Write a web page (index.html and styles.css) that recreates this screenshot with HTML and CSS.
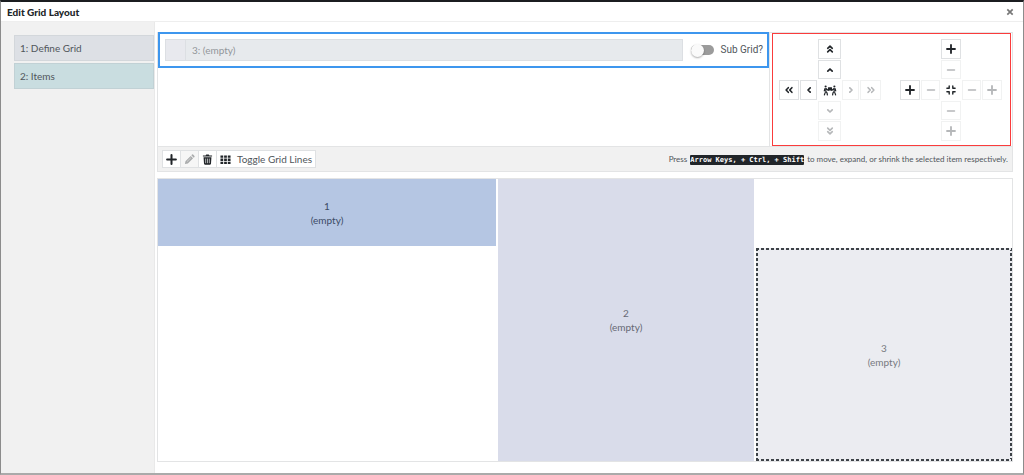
FILE: index.html
```html
<!DOCTYPE html>
<html lang="en">
<head>
<meta charset="utf-8">
<title>Edit Grid Layout</title>
<link rel="stylesheet" href="styles.css">
</head>
<body>
<svg class="sprite" aria-hidden="true">
  <symbol id="plus" viewBox="0 0 12 12"><path d="M6 1.2v9.6M1.2 6h9.6" fill="none" stroke="currentColor" stroke-width="2.2" stroke-linecap="round"/></symbol>
  <symbol id="minus" viewBox="0 0 12 12"><path d="M1.8 6h8.4" fill="none" stroke="currentColor" stroke-width="1.8" stroke-linecap="round"/></symbol>
  <symbol id="angle" viewBox="0 0 12 12"><path d="M3.8 7.2L6 5l2.200 2.200" fill="none" stroke="currentColor" stroke-width="1.700" stroke-linecap="round" stroke-linejoin="round"/></symbol>
  <symbol id="angles" viewBox="0 0 12 12"><path d="M3.700 5.300L6 3.100l2.300 2.200M3.700 8.900L6 6.700l2.300 2.200" fill="none" stroke="currentColor" stroke-width="1.600" stroke-linecap="round" stroke-linejoin="round"/></symbol>
  <symbol id="carry" viewBox="0 0 16 12"><g fill="none" stroke="currentColor" stroke-width="1.4" stroke-linecap="round" stroke-linejoin="round"><path d="M3.200 3.700v3.400l1.400 1.600.4 2.200M2.500 8.400L1.600 11M3.700 4l1.700 1.500h1.100M12.800 3.700v3.400l-1.400 1.600-.4 2.200M13.500 8.400l.9 2.600M12.300 4l-1.700 1.500H9.500"/><path d="M2.200 3.800L1.500 6.500M13.800 3.800l.7 2.700"/></g><circle cx="3" cy="1.400" r="1.200" fill="currentColor"/><circle cx="13" cy="1.400" r="1.200" fill="currentColor"/><rect x="5.700" y="2.200" width="4.600" height="3.900" rx=".5" fill="currentColor"/></symbol>
  <symbol id="compress" viewBox="0 0 12 12"><path d="M4.200 1.900v2.300H1.900M7.800 1.900v2.300h2.300M4.200 10.100V7.800H1.900M7.800 10.100V7.800h2.300" fill="none" stroke="currentColor" stroke-width="1.400" stroke-linecap="round" stroke-linejoin="round"/></symbol>
  <symbol id="pencil" viewBox="0 0 12 12"><path d="M1 11l.6-3.200L7.300 2.100l2.600 2.600-5.700 5.700zM8 1.400l.8-.8q.6-.4 1.100 0L11.400 2.100q.4.500 0 1.100l-.8.800z" fill="currentColor"/><path d="M3.200 8.400L7.500 4.100" stroke="#f1f1f1" stroke-width=".6"/></symbol>
  <symbol id="trash" viewBox="0 0 12 12"><path d="M1 1.500h3L4.600.5h2.800L8 1.500h3v1.300H1zM1.700 3.500h8.600l-.5 7.200q-.1.900-1 .9H3.200q-.9 0-1-.9z" fill="currentColor"/><path d="M4 5v5M6 5v5M8 5v5" stroke="#fff" stroke-width=".7"/></symbol>
  <symbol id="cells" viewBox="0 0 12 12"><path d="M.5 1.500h3v2.500h-3zM4.500 1.500h3v2.500h-3zM8.500 1.500h3v2.500h-3zM.5 5h3v2.500h-3zM4.500 5h3v2.500h-3zM8.500 5h3v2.500h-3zM.5 8.500h3V11h-3zM4.500 8.500h3V11h-3zM8.500 8.500h3V11h-3z" fill="currentColor"/></symbol>
</svg>
<div class="dialog" role="dialog" aria-labelledby="title">
  <header class="dialog-header">
    <h1 id="title">Edit Grid Layout</h1>
    <button class="close" aria-label="Close"><svg viewBox="0 0 8 8"><path d="M1.300 1.300l5.400 5.400M6.700 1.300L1.300 6.700" fill="none" stroke="currentColor" stroke-width="1.700"/></svg></button>
  </header>
  <div class="dialog-body">
    <nav class="steps">
      <button class="step">1: Define Grid</button>
      <button class="step active">2: Items</button>
    </nav>
    <main class="content">
      <section class="panel">
        <div class="panel-top">
          <div class="items">
            <div class="item-row">
              <div class="item-field">
                <span class="swatch"></span>
                <input class="item-name" type="text" value="3: (empty)" aria-label="Item name" disabled>
              </div>
              <label class="switch"><input type="checkbox"><span>Sub Grid?</span></label>
            </div>
          </div>
          <div class="controls">
            <div class="pad move">
              <button class="pad-btn top2" aria-label="Move to top"><svg><use href="#angles"/></svg></button>
              <button class="pad-btn top1" aria-label="Move up"><svg><use href="#angle"/></svg></button>
              <button class="pad-btn left2" aria-label="Move to left edge"><svg class="turn-left"><use href="#angles"/></svg></button>
              <button class="pad-btn left1" aria-label="Move left"><svg class="turn-left"><use href="#angle"/></svg></button>
              <span class="hub"><svg class="wide"><use href="#carry"/></svg></span>
              <button class="pad-btn right1" aria-label="Move right" disabled><svg class="turn-right"><use href="#angle"/></svg></button>
              <button class="pad-btn right2" aria-label="Move to right edge" disabled><svg class="turn-right"><use href="#angles"/></svg></button>
              <button class="pad-btn bottom1" aria-label="Move down" disabled><svg class="turn-down"><use href="#angle"/></svg></button>
              <button class="pad-btn bottom2" aria-label="Move to bottom" disabled><svg class="turn-down"><use href="#angles"/></svg></button>
            </div>
            <div class="pad resize">
              <button class="pad-btn top2" aria-label="Expand up"><svg><use href="#plus"/></svg></button>
              <button class="pad-btn top1" aria-label="Shrink top" disabled><svg><use href="#minus"/></svg></button>
              <button class="pad-btn left2" aria-label="Expand left"><svg><use href="#plus"/></svg></button>
              <button class="pad-btn left1" aria-label="Shrink left" disabled><svg><use href="#minus"/></svg></button>
              <span class="hub"><svg><use href="#compress"/></svg></span>
              <button class="pad-btn right1" aria-label="Shrink right" disabled><svg><use href="#minus"/></svg></button>
              <button class="pad-btn right2" aria-label="Expand right" disabled><svg><use href="#plus"/></svg></button>
              <button class="pad-btn bottom1" aria-label="Shrink bottom" disabled><svg><use href="#minus"/></svg></button>
              <button class="pad-btn bottom2" aria-label="Expand down" disabled><svg><use href="#plus"/></svg></button>
            </div>
          </div>
        </div>
        <div class="toolbar">
          <div class="tools">
            <button class="tool" aria-label="Add item"><svg><use href="#plus"/></svg></button>
            <button class="tool" aria-label="Edit item" disabled><svg><use href="#pencil"/></svg></button>
            <button class="tool" aria-label="Delete item"><svg><use href="#trash"/></svg></button>
            <button class="tool"><svg><use href="#cells"/></svg>Toggle Grid Lines</button>
          </div>
          <p class="hint">Press <kbd>Arrow Keys, + Ctrl, + Shift</kbd> to move, expand, or shrink the selected item respectively.</p>
        </div>
      </section>
      <section class="canvas">
        <div class="cell one"><span>1</span><span>(empty)</span></div>
        <div class="cell two"><span>2</span><span>(empty)</span></div>
        <div class="cell three"><span>3</span><span>(empty)</span></div>
      </section>
    </main>
  </div>
</div>
</body>
</html>
```

FILE: styles.css
```css
* { box-sizing: border-box; }
body {
  margin: 0;
  background: #fff;
  color: #50565b;
  font: 10px/14px Lato, "Noto Sans", sans-serif;
}
button, input { font: inherit; color: inherit; margin: 0; }
button { padding: 0; background: #fff; border: 1px solid #dfe1e3; }
svg { display: block; width: 12px; height: 12px; }
.sprite { display: none; }
.dialog {
  display: flex;
  flex-direction: column;
  min-height: 100vh;
  border: 1px solid #8c8c8c;
  border-top: 2px solid #1b1d20;
  border-bottom: 2px solid #aaa;
}
.dialog-header {
  display: flex;
  align-items: center;
  justify-content: space-between;
  height: 20px;
  padding: 0 9px 0 6px;
  border-bottom: 1px solid #eee;
}
h1 { margin: 0; color: #212529; font-size: 10px; line-height: 14px; font-weight: 900; }
.close { border: 0; color: #777; }
.close svg { width: 8px; height: 8px; }
.dialog-body { display: flex; flex: 1; }
.steps {
  display: flex;
  flex-direction: column;
  gap: 2px;
  flex: none;
  width: 154px;
  padding: 13px 0 0 13px;
  background: #f1f1f1;
  border-right: 1px solid #e9e9e9;
}
.step {
  height: 26px;
  padding: 0 5px;
  text-align: left;
  background: #dde0e5;
  border: 1px solid #d3d7db;
}
.step.active { background: #c9dde0; border-color: #c1d1d5; }
.content {
  display: flex;
  flex-direction: column;
  flex: 1;
  gap: 6px;
  min-width: 0;
  padding: 10px 10px 11px 2px;
}
.panel { border: 1px solid #e3e4e5; }
.panel-top { display: flex; }
.items { flex: 1; min-width: 0; border-right: 1px solid #e3e4e5; }
.item-row {
  display: flex;
  align-items: center;
  gap: 8px;
  height: 36px;
  margin-top: -1px;
  padding: 0 4px 0 5px;
  border: 2px solid #3d96ee;
}
.item-field { display: flex; flex: 1; height: 22px; border: 1px solid #dcdfe3; background: #e7eaed; }
.swatch { width: 20px; background: #e8e9ee; border-right: 1px solid #dcdfe3; }
.item-name { flex: 1; min-width: 0; padding: 0 6px; border: 0; background: none; color: #92969a; }
.switch { display: flex; align-items: center; gap: 6px; font-family: Roboto, sans-serif; }
.switch input {
  appearance: none;
  display: flex;
  align-items: center;
  width: 23px;
  height: 10px;
  border-radius: 5px;
  background: #9b9b9b;
}
.switch input::before {
  content: "";
  width: 13px;
  height: 13px;
  flex: none;
  border-radius: 50%;
  background: #fafafa;
  box-shadow: 0 1px 2px #0005;
}
.switch input:checked { justify-content: flex-end; }
.controls {
  display: flex;
  justify-content: space-between;
  gap: 19px;
  margin: 0 1px 0 2px;
  padding: 5px 8px 4px 6px;
  border: 1px solid #fa3c3c;
}
.pad {
  display: grid;
  grid-template-columns: 20px 17px 23px 17px 21px;
  grid-template-rows: 20px 19px 20px 19px 20px;
  gap: 1px;
  grid-template-areas: ". . a . ." ". . b . ." "c d e f g" ". . h . ." ". . i . .";
  color: #212529;
}
.pad.resize { grid-template-columns: 20px 19px 20px 19px 20px; }
.pad-btn, .hub { display: flex; align-items: center; justify-content: center; color: #212529; }
.pad-btn:disabled { color: #b5b7b9; border-color: #f1f2f2; }
.top2 { grid-area: a; }
.top1 { grid-area: b; }
.left2 { grid-area: c; }
.left1 { grid-area: d; }
.hub { grid-area: e; }
.right1 { grid-area: f; }
.right2 { grid-area: g; }
.bottom1 { grid-area: h; }
.bottom2 { grid-area: i; }
.resize .pad-btn svg { width: 10px; height: 10px; }
.pad .wide { width: 14px; height: 11px; }
.turn-left { transform: rotate(-90deg); }
.turn-right { transform: rotate(90deg); }
.turn-down { transform: rotate(180deg); }
.toolbar {
  display: flex;
  align-items: center;
  justify-content: space-between;
  height: 25px;
  padding: 0 4px;
  background: #f1f1f1;
  border-top: 1px solid #e3e4e5;
}
.tools { display: flex; }
.tool { display: flex; align-items: center; gap: 6px; height: 18px; padding: 0 3px; }
.tool + .tool { border-left: 0; }
.tool svg { width: 11px; height: 11px; color: #212529; }
.tool:disabled { background: #f6f6f6; }
.tool:disabled svg { color: #a9abac; }
.hint { margin: 0; font-size: 8px; white-space: nowrap; }
kbd {
  margin: 0 1px;
  padding: 1px 0;
  border-radius: 1px;
  background: #212529;
  color: #fff;
  font: bold 7px/8px "DejaVu Sans Mono", monospace;
}
.canvas {
  display: grid;
  flex: 1;
  grid-template-columns: 338fr 256fr 256fr;
  grid-template-rows: 67fr 213fr;
  gap: 2px;
  border: 1px solid #e3e4e5;
}
.cell { display: flex; flex-direction: column; align-items: center; justify-content: center; }
.one { grid-area: 1 / 1; background: #b5c6e3; color: #3c4b66; }
.two { grid-area: 1 / 2 / 3 / 3; background: #d9dcea; color: #666974; }
.three {
  --dash: #3d4247 0 3px, #ebecf1 3px 5px;
  grid-area: 2 / 3;
  color: #777a80;
  background:
    repeating-linear-gradient(90deg, var(--dash)) top / 100% 2px no-repeat,
    repeating-linear-gradient(90deg, var(--dash)) bottom / 100% 2px no-repeat,
    repeating-linear-gradient(var(--dash)) left / 2px 100% no-repeat,
    repeating-linear-gradient(var(--dash)) right / 2px 100% no-repeat,
    #ebecf1;
}
```
